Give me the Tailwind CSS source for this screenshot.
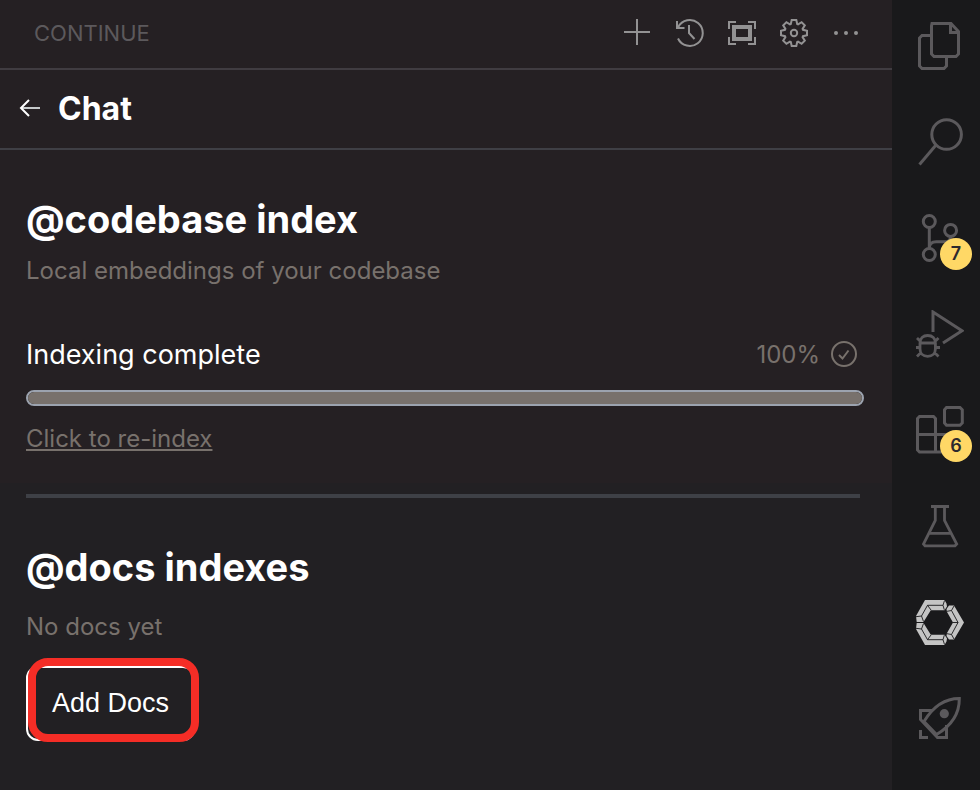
<!DOCTYPE html>
<html lang="en">
<head>
    <meta charset="UTF-8">
    <meta name="viewport" content="width=device-width, initial-scale=1.0">
    <title>Continue</title>
    <script src="https://cdn.jsdelivr.net/npm/@tailwindcss/browser@4"></script>
</head>
<body class="bg-[#222023] font-['Inter',sans-serif] text-white">
    <div class="flex min-h-screen">
        <main class="flex-1 min-w-0">
            <div class="bg-[#252023] pb-7">
                <!-- Panel title bar -->
                <header class="flex items-center justify-between h-[70px] pl-[34px] pr-[30px] pb-0.5 border-b-2 border-[#403c41]">
                    <span class="text-[22px] leading-7 text-[#5c595c]">CONTINUE</span>
                    <div class="flex items-center gap-5 text-[#939293]">
                        <button aria-label="New session">
                            <svg class="block size-8" viewBox="0 0 32 32" fill="none" stroke="currentColor" stroke-width="2"><path d="M15 2v26M2 15h26"/></svg>
                        </button>
                        <button aria-label="History">
                            <svg class="block size-8" viewBox="0 0 32 32" fill="none" stroke="currentColor" stroke-width="2"><path d="M4.200 10A13 13 0 1 1 4 21.500M3 4v7h7.500M15 8v8l5.500 6"/></svg>
                        </button>
                        <button aria-label="Full screen">
                            <svg class="block size-8" viewBox="0 0 32 32" fill="none" stroke="currentColor" stroke-width="2"><path d="M3 12V5h7M22 5h7v7M29 20v7h-7M10 27H3v-7"/><path stroke-width="4" d="M8 10h16v12H8z"/></svg>
                        </button>
                        <button aria-label="Settings">
                            <svg class="block size-8" viewBox="-16 -16 32 32" fill="none" stroke="currentColor" stroke-width="2"><path d="M-2.300-13h4.600l.9 4 .9.400 3.500-2.200 3.200 3.200-2.200 3.500.4.900 4 .9v4.600l-4 .9-.4.900 2.200 3.500-3.200 3.200-3.500-2.200-.9.400-.9 4h-4.600l-.9-4-.9-.4-3.500 2.200-3.200-3.200 2.200-3.500-.4-.9-4-.9v-4.600l4-.9.4-.9-2.200-3.500 3.200-3.200 3.500 2.200.9-.4z"/><circle r="3.200"/></svg>
                        </button>
                        <button aria-label="More actions">
                            <svg class="block size-8" viewBox="0 0 32 32" fill="currentColor"><circle cx="6" cy="16" r="2"/><circle cx="16" cy="16" r="2"/><circle cx="26" cy="16" r="2"/></svg>
                        </button>
                    </div>
                </header>

                <div class="flex items-center gap-4 h-20 px-[18px] border-b-2 border-[#3f3f45]">
                    <button aria-label="Back">
                        <svg class="block size-6" viewBox="0 0 24 24" fill="none" stroke="currentColor" stroke-width="2"><path stroke="#c5c9ca" d="M3 11h19"/><path d="M11 3l-8 8 8 8"/></svg>
                    </button>
                    <h1 class="text-[32px] leading-10 font-bold">Chat</h1>
                </div>

                <section class="pl-[26px] pr-7 pt-[45px]">
                    <h2 class="text-[38px] leading-12 font-bold">@codebase index</h2>
                    <p class="mt-3 text-2xl text-[#78716c]">Local embeddings of your codebase</p>
                    <div class="flex items-center justify-between mt-12 pr-1">
                        <span class="text-[27px] leading-10">Indexing complete</span>
                        <div class="flex items-center gap-2 text-2xl text-[#78716c]">
                            <span>100%</span>
                            <svg class="size-8" viewBox="0 0 32 32" fill="none" stroke="currentColor" stroke-width="2"><circle cx="16" cy="15" r="12"/><path d="M11 16l3.500 3.500L20.500 11.500"/></svg>
                        </div>
                    </div>
                    <div class="mt-[15px] h-4 rounded-full border-2 border-[#9ca3af] overflow-hidden" role="progressbar" aria-label="Indexing" aria-valuenow="100">
                        <div class="h-full bg-[#78716c]" style="width: 100%"></div>
                    </div>
                    <a href="#" class="inline-block mt-[17px] text-2xl text-[#78716c] underline underline-offset-2 decoration-2">Click to re-index</a>
                </section>
            </div>

            <section class="pl-[26px] pr-8 pt-[11px]">
                <hr class="border-t-4 border-[#3e4046]">
                <h2 class="mt-[45px] text-[38px] leading-12 font-bold">@docs indexes</h2>
                <p class="mt-5 text-2xl text-[#78716c]">No docs yet</p>
                <div class="relative inline-block mt-[23px]">
                    <button class="block h-[75px] px-6 rounded-xl border-2 border-white font-['Liberation_Sans',sans-serif] text-[27px]">Add Docs</button>
                    <div class="absolute left-0.5 -right-1 -top-2 -bottom-px rounded-[20px] border-8 border-[#f52d26] pointer-events-none"></div>
                </div>
            </section>
        </main>

        <!-- Activity bar -->
        <nav class="flex flex-col items-center gap-12 w-[88px] pt-[22px] pl-2 bg-[#19191b] text-[#5b595c]">
            <button aria-label="Explorer">
                <svg class="block size-12" viewBox="0 0 48 48" fill="none" stroke="currentColor" stroke-width="3"><path d="M14 13.500H6L3.500 16v28L6 46.500h22l2.500-2.500v-8"/><path d="M16 1.500h19l7.500 8V32L40 34.500H18L15.500 32V4z"/><path d="M34.500 1v9.500h8"/></svg>
            </button>
            <button aria-label="Search">
                <svg class="block size-12" viewBox="0 0 48 48" fill="none" stroke="currentColor" stroke-width="3"><circle cx="30.600" cy="16.500" r="14.800"/><path d="M20 27L3.500 46.500"/></svg>
            </button>
            <button class="relative" aria-label="Source control">
                <svg class="block size-12" viewBox="0 0 48 48" fill="none" stroke="currentColor" stroke-width="3"><circle cx="13.300" cy="7.500" r="6"/><circle cx="13.300" cy="40.500" r="6"/><circle cx="34.600" cy="16.400" r="6"/><path d="M13.300 13.500V34c0-4 2.500-6.200 7-6.200h9c3 0 5-1.800 5.300-5"/></svg>
                <span class="absolute left-6 top-6 size-8 rounded-full bg-[#ffd866] text-[#2d2a2e] text-lg leading-8 font-semibold text-center">7</span>
            </button>
            <button aria-label="Run and debug">
                <svg class="block size-12" viewBox="0 0 48 48" fill="none" stroke="currentColor" stroke-width="3"><path d="M17 22V2l29 18.700L27 33"/><path stroke-width="2.800" d="M3.500 33h16.500M4 33v6c0 4.500 3 7.300 7.700 7.300s7.700-2.800 7.700-7.300v-6c0-4.500-3-7.500-7.700-7.500S4 28.500 4 33zM1 28l4 4M22.500 28l-4 4M0 37.500h4M19.500 37.500H24M1 46.500l4.500-4.500M22.500 46.500L18 42"/></svg>
            </button>
            <button class="relative" aria-label="Extensions">
                <svg class="block size-12" viewBox="0 0 48 48" fill="none" stroke="currentColor" stroke-width="3"><path d="M3.500 10.500h14l2 2v16H38l1.500 1.500v14l-2 2h-34l-2-2v-31.500zM1.500 28.500h18v18"/><path d="M30.500 1.500h13.500l2.300 2.300v13.200l-2.300 2.300H30.500L28.500 17V3.800z"/></svg>
                <span class="absolute left-6 top-6 size-8 rounded-full bg-[#ffd866] text-[#2d2a2e] text-lg leading-8 font-semibold text-center">6</span>
            </button>
            <button aria-label="Testing">
                <svg class="block size-12" viewBox="0 0 48 48" fill="none" stroke="currentColor" stroke-width="2.800"><path d="M15 4.500h18M19.300 5v13.500L7.500 42l1.500 1.800h30l1.700-1.800L28.500 18.500V5M13.500 31.300h21"/></svg>
            </button>
            <button aria-label="Continue">
                <svg class="block size-12" viewBox="0 0 48 48" fill="#c4c4c4" stroke="#19191b" stroke-width="0.900" stroke-linejoin="round">
                    <path stroke="none" d="M9 2h19.500l2 3.500.5 3-2.500 3.700H14.800L7.500 24H.7L0 18z"/>
                    <path fill="none" d="M28.500 2.500l-1.500 4.800H11.500L5.500 18 0 18.700M27 7.300l1.300 4.500M11.500 7.300l3.500 4.700M5.500 18l2 5.500"/>
                    <path stroke="none" d="M9 47h19.500l2-3.500.5-3-2.500-3.700H14.800L7.500 25H.7L0 31z"/>
                    <path fill="none" d="M28.500 46.500L27 41.700H11.500L5.500 31 0 30.300M27 41.700l1.300-4.500M11.500 41.700L15 37M5.500 31l2-5.500"/>
                    <path stroke="none" d="M33 7.500h5l10 17-10 17h-5l-2.500-3.500.5-3 6-10.500-6-10.500-.5-3z"/>
                    <path fill="none" d="M31 13.300l4.500-.8L38 8M35.500 12.500l6.500 12-6.500 12M31 35.700l4.500.8L38 41M36.500 24.500H42"/>
                </svg>
            </button>
            <button aria-label="Deploy">
                <svg class="block size-12" viewBox="0 0 48 48" fill="none" stroke="currentColor" stroke-width="3"><path d="M43.300 4.500C28 4.500 16.500 13.500 8 27.500L20.500 40.500C35 32 43.500 20 43.300 4.500z"/><path d="M17 16.500H4.500v9L21.500 43.500h9V31M4.500 36v7.500H12"/><circle cx="28.300" cy="19.700" r="4.600" fill="currentColor" stroke="none"/></svg>
            </button>
        </nav>
    </div>
</body>
</html>
